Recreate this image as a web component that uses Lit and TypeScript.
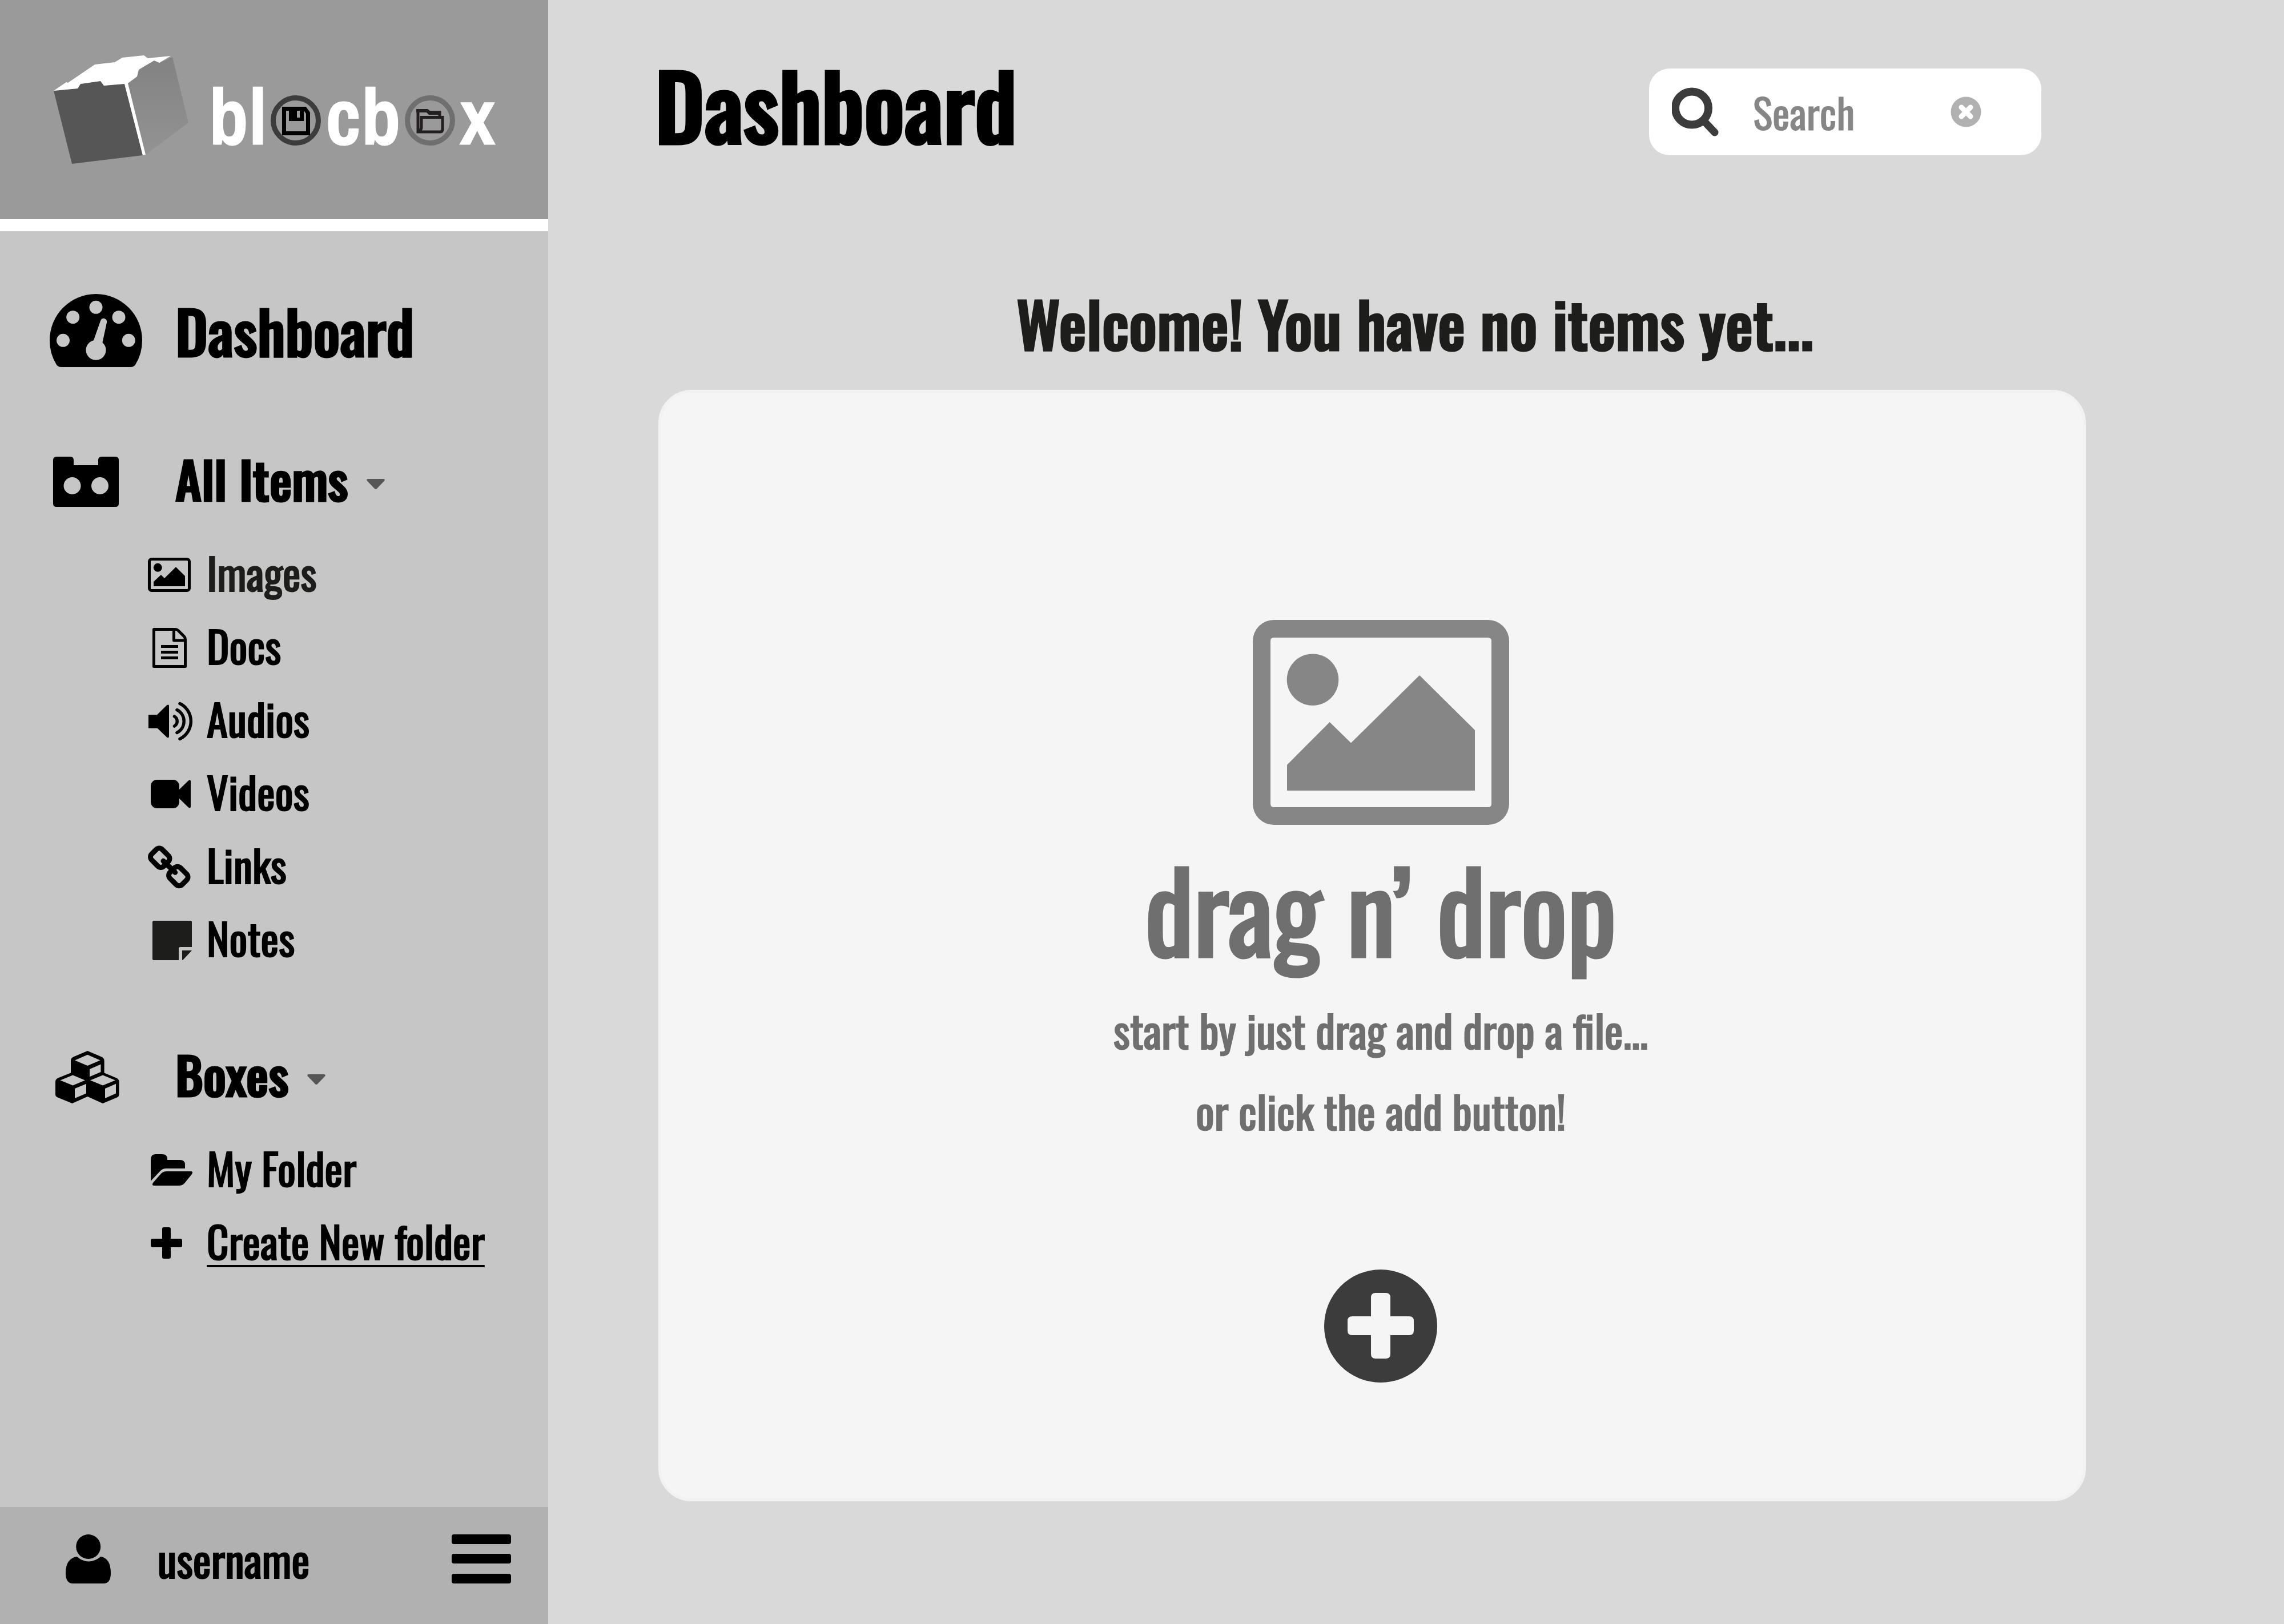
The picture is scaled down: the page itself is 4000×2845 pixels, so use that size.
import { LitElement, html, css, svg, nothing } from "lit";
import type { TemplateResult } from "lit";
import { customElement, property, state } from "lit/decorators.js";

const itemIcons: Record<string, TemplateResult> = {
  images: svg`
    <rect x="3.5" y="12.5" width="70" height="55" rx="4" fill="none" stroke="currentColor" stroke-width="5"/>
    <circle cx="18.3" cy="27.3" r="7.5"/>
    <path d="M11 52 24 40 30 46 50 26.3 66 42V60H11Z"/>`,
  docs: svg`
    <path d="M11.5 7.5H49Q52 7.5 54 9.5L64.5 20Q66.5 22 66.5 25V72.5H11.5Z M46.5 7.5V27H66.5" fill="none" stroke="currentColor" stroke-width="5" stroke-linejoin="round"/>
    <path d="M24 37.5H54M24 47.5H54M24 57.5H54" stroke="currentColor" stroke-width="5"/>`,
  audios: svg`
    <path d="M2 29.3H17L34 12.5Q38 10 38 14V67Q38 71 34 68.5L17.7 52.7H2Z"/>
    <path d="M47.5 32A10 10 0 0 1 47.5 49M52 20.5A22.5 22.5 0 0 1 52 60.5M57 9.5A34.5 34.5 0 0 1 57 71.5" fill="none" stroke="currentColor" stroke-width="5.5" stroke-linecap="round"/>`,
  videos: svg`
    <rect x="6" y="15" width="50" height="50" rx="11"/>
    <path d="M55 33 72 16.5Q76 14 76 18V62Q76 66 72 63.5L55 47Z"/>`,
  links: svg`
    <g fill="none" stroke="currentColor" stroke-width="9">
      <rect x="7.3" y="10.7" width="30" height="26" rx="7.5" transform="rotate(45 22.3 23.7)"/>
      <rect x="39.3" y="43" width="30" height="26" rx="7.5" transform="rotate(45 54.3 56)"/>
      <path d="M28 29.3 48.7 49.3" stroke-linecap="round"/>
    </g>`,
  notes: svg`
    <path fill="#1d1d1b" d="M11 6H76Q78 6 78 8V52H58Q55 52 55 55V75H11Q9 75 9 73V8Q9 6 11 6Z M61 58H78L64 73Q62 75 61 75Z"/>`,
  folder: svg`
    <path d="M6 59V21Q6 12 15 12H26Q35 12 35 20V22H57Q66 22 66 30V37H33Q27 37 23 41Z"/>
    <path d="M34 42H76Q81 42 78 47L65 63Q61 67 56 67H12Q7 67 10 62L24 46Q28 42 34 42Z"/>`,
  plus: svg`
    <path d="M26 15Q26 12 29 12H38Q41 12 41 15V32H58Q61 32 61 35V44Q61 47 58 47H41V64Q41 67 38 67H29Q26 67 26 64V47H9Q6 47 6 44V35Q6 32 9 32H26Z"/>`,
};

const groupIcons: Record<string, TemplateResult> = {
  dashboard: svg`<svg viewBox="0 0 162 128" width="162" height="128" aria-hidden="true">
    <path d="M0 81A81 81 0 0 1 162 81Q162 105 150 124Q147 128 142 128H20Q15 128 12 124Q0 105 0 81Z" fill="currentColor"/>
    <g fill="#c6c6c6">
      <circle cx="81" cy="23.3" r="11.5"/><circle cx="40.7" cy="40.7" r="11.5"/>
      <circle cx="121" cy="40.7" r="11.5"/><circle cx="23.5" cy="81.3" r="11.5"/>
      <circle cx="138.3" cy="81.3" r="11.5"/><circle cx="81" cy="98.3" r="17.5"/>
      <path d="M76 84 89 47Q91 42 96 43Q101 45 100 50L92 87Z"/>
    </g></svg>`,
  items: svg`<svg viewBox="-6 0 168 88" width="168" height="88" aria-hidden="true">
    <path fill="currentColor" fill-rule="evenodd" d="M6 0H30Q36 0 36 6V15H79V6Q79 0 85 0H109Q115 0 115 6V82Q115 88 109 88H6Q0 88 0 82V6Q0 0 6 0ZM33.5 36A15 15 0 1 0 33.5 66A15 15 0 1 0 33.5 36ZM82 36A15 15 0 1 0 82 66A15 15 0 1 0 82 36Z"/></svg>`,
  boxes: svg`<svg viewBox="-10 0 168 92" width="168" height="92" aria-hidden="true">
    <path fill="currentColor" d="M56.3 0 81 10.5Q85.6 12.5 85.6 17V38.5L107 47.5Q111.5 49.5 111.5 54V76Q111.5 80 108 81.5L83 92 56.3 80 29.5 92 4 81.5Q0 80 0 76V54Q0 49.5 4.5 47.5L27 38.5V17Q27 12.5 31.5 10.5Z"/>
    <g fill="#c6c6c6">
      <path d="M34 16.4 56.3 6.8 78.5 16.4 56.3 26Z M60 32 79.5 23.5V37L60 45.3Z"/>
      <path d="M8.5 51.6 30.5 42.5 52 51.6 30.5 60.4Z M34 66 54 57.7V74.4L34 83Z"/>
      <path d="M61 51.6 83 42.5 105 51.6 83 60.4Z M87 66 106 57.7V74.4L87 83Z"/>
    </g></svg>`,
};

interface Entry { icon: string; label: string; soft?: boolean; action?: boolean }

const items: Entry[] = [
  { icon: "images", label: "Images", soft: true },
  { icon: "docs", label: "Docs" },
  { icon: "audios", label: "Audios" },
  { icon: "videos", label: "Videos" },
  { icon: "links", label: "Links" },
  { icon: "notes", label: "Notes" },
];
const boxes: Entry[] = [
  { icon: "folder", label: "My Folder" },
  { icon: "plus", label: "Create New folder", action: true },
];

@customElement("blocbox-brand")
export class BlocboxBrand extends LitElement {
  static styles = css`
    :host { display: block; }
    .brand { display: flex; align-items: flex-start; padding: 96px 0 97px 94px; background: #9a9a9a; border-bottom: 21px solid #fff; }
    .cube { display: block; flex: none; }
    .word { box-sizing: border-box; height: 191px; margin-left: 36px; padding-top: 27px; color: #fff; font: 700 139px/160px "Archivo Narrow", "Roboto Condensed", "Liberation Sans", sans-serif; -webkit-text-stroke: 1px #fff; white-space: nowrap; }
    .o { margin: 0 7px; vertical-align: -2px; }
  `;
  render() {
    return html`<div class="brand">
      <svg class="cube" viewBox="94 96 236 191" width="236" height="191" aria-hidden="true">
        <defs><linearGradient id="side" x1="0" y1="0" x2="0" y2="1"><stop offset="0" stop-color="#828282"/><stop offset="1" stop-color="#939393"/></linearGradient></defs>
        <path fill="url(#side)" d="M222 146 240 134 243 121 270 106 279 110 302 100 330 215 255 271Z"/>
        <path fill="#565656" d="M94 159 136 155 141 147 176 142 182 150 218 146 250 272 126 287Z"/>
        <path fill="#fff" d="M94 159 116 144 119 145 166 113 201 109 214 101 252 97 259 102 299 98 279 110 270 106 243 122 240 134 224 146 255 271 250 272 218 147 182 150 176 142 141 147 136 155Z"/>
      </svg>
      <div class="word">bl<svg class="o" viewBox="0 0 88 88" width="88" height="88" role="img" aria-label="o">
          <circle cx="44" cy="44" r="39.5" fill="none" stroke="#3c3c3c" stroke-width="9"/>
          <path d="M23.5 23.5H60L65.5 31V66.5H23.5Z" fill="none" stroke="#000" stroke-width="7"/>
          <path fill="#000" fill-rule="evenodd" d="M32 23H58V45H32ZM46 27V39H51V27Z"/>
        </svg>cb<svg class="o" viewBox="0 0 88 88" width="88" height="88" role="img" aria-label="o">
          <circle cx="44" cy="44" r="39.5" fill="none" stroke="#6f6f6f" stroke-width="9"/>
          <path fill="none" stroke="#231f20" stroke-width="5" d="M61 36V30H44L39 27H23V64H62Q66 64 66 59V38.5H29V56Q29 60 25 63"/>
          <path fill="#231f20" d="M20 24H40L44 27.5H63V34H42L38 30H20Z"/>
        </svg>x</div>
    </div>`;
  }
}

@customElement("nav-group")
export class NavGroup extends LitElement {
  @property() label = "";
  @property() icon = "items";
  @property({ attribute: false }) entries: Entry[] = [];
  @state() private open = true;
  static styles = css`
    :host { display: block; }
    .head { display: flex; align-items: center; width: 100%; height: 120px; margin: 0; padding: 0 0 0 87px; border: 0; background: none; color: #000; font: 500 88px/120px Oswald, "Roboto Condensed", sans-serif; -webkit-text-stroke: 3px #000; text-align: left; cursor: pointer; }
    .slot { display: flex; flex: none; width: 220px; }
    .title { flex: none; margin-bottom: 12px; }
    .caret { margin: 8px 0 0 32px; }
    ul { margin: 39px 0 0; padding: 0 0 0 258px; list-style: none; }
    .row { display: flex; align-items: center; gap: 24px; height: 128px; margin: 0; padding: 0; border: 0; background: none; color: #000; font: 400 75px/120px Oswald, "Roboto Condensed", sans-serif; -webkit-text-stroke: 2px currentColor; text-decoration: none; white-space: nowrap; cursor: pointer; }
    .text { margin-bottom: 8px; }
    .soft { color: #1d1d1b; }
    .add { text-decoration: underline; text-decoration-thickness: 4px; text-underline-offset: 9px; text-decoration-skip-ink: none; }
    svg { display: block; flex: none; fill: currentColor; overflow: visible; }
  `;
  private entry(e: Entry) {
    const tone = e.soft ? "text soft" : e.action ? "text add" : "text";
    const inner = html`<svg viewBox="0 0 80 80" width="80" height="80" aria-hidden="true">${itemIcons[e.icon]}</svg><span class=${tone}>${e.label}</span>`;
    return html`<li>${e.action
      ? html`<button class="row" type="button">${inner}</button>`
      : html`<a class="row" href="#${e.icon}">${inner}</a>`}</li>`;
  }
  render() {
    return html`
      <button class="head" type="button" aria-expanded=${this.open} @click=${() => (this.open = !this.open)}>
        <span class="slot">${groupIcons[this.icon]}</span>
        <span class="title">${this.label}</span>
        <svg class="caret" viewBox="0 0 32 18" width="32" height="18" aria-hidden="true"><path fill="#565656" stroke="none" d="M2 0H30Q33 1 31 3.5L18 17Q16 19 14 17L1 3.5Q-1 1 2 0Z"/></svg>
      </button>
      ${this.open ? html`<ul>${this.entries.map((e) => this.entry(e))}</ul>` : nothing}`;
  }
}

@customElement("app-root")
export class AppRoot extends LitElement {
  static styles = css`
    :host { display: block; color: #000; font-family: Oswald, "Roboto Condensed", sans-serif; }
    .app { display: grid; grid-template-columns: minmax(900px, 24%) 1fr; min-height: 100vh; background: #d9d9d9; }
    .side { display: flex; flex-direction: column; background: #c6c6c6; }
    nav { flex: 1; padding-top: 110px; }
    .home { display: flex; align-items: center; height: 128px; padding-left: 87px; color: #000; font-weight: 500; font-size: 103px; line-height: 132px; text-decoration: none; -webkit-text-stroke: 3px #000; }
    .slot { display: flex; flex: none; width: 220px; }
    .first { margin-top: 141px; }
    .second { margin-top: 116px; }
    svg { display: block; flex: none; }
    .user { display: flex; align-items: center; height: 205px; padding: 0 65px 24px 115px; box-sizing: border-box; background: #b1b1b1; font-size: 76px; line-height: 120px; -webkit-text-stroke: 2px #000; }
    .name { margin: 0 auto 0 82px; }
    .icon-btn { display: block; margin: 0; padding: 0; border: 0; background: none; cursor: pointer; }
    main { display: flex; flex-direction: column; padding: 120px 347px 215px 193px; }
    .top { display: flex; justify-content: space-between; align-items: center; height: 152px; padding-right: 78px; }
    h1 { margin: 0 0 28px -6px; font-weight: 500; font-size: 156px; line-height: 152px; -webkit-text-stroke: 5px #000; }
    .search { display: flex; align-items: center; width: 687px; height: 152px; padding: 0 105px 0 40px; box-sizing: border-box; border-radius: 36px; background: #fff; }
    .search input { flex: 1; min-width: 0; height: 120px; margin: 0 38px 0 60px; padding: 0; border: 0; outline: 0; background: none; color: #3c3c3c; font: 400 72px/120px Oswald, "Roboto Condensed", sans-serif; -webkit-text-stroke: 1px #868686; }
    .search input::placeholder { color: #868686; opacity: 1; }
    h2 { margin: 193px 0 0; padding-left: 150px; text-align: center; color: #1d1d1b; font-weight: 500; font-size: 108px; line-height: 200px; -webkit-text-stroke: 3px #1d1d1b; }
    .drop { flex: 1; display: flex; flex-direction: column; align-items: center; margin-top: 18px; padding: 398px 0 0 30px; box-sizing: border-box; border: 5px solid #f2f2f2; border-radius: 58px; background: #f5f5f5; color: #6f6f6f; }
    .big { margin: 14px 0 13px; font-size: 193px; line-height: 260px; -webkit-text-stroke: 5px #6f6f6f; }
    .hint { margin: 0; font-size: 77px; line-height: 142px; -webkit-text-stroke: 2px #6f6f6f; }
    .plus { margin-top: 208px; }
  `;
  render() {
    return html`<div class="app">
      <aside class="side">
        <blocbox-brand></blocbox-brand>
        <nav aria-label="Library">
          <a class="home" href="#dashboard"><span class="slot">${groupIcons.dashboard}</span>Dashboard</a>
          <nav-group class="first" label="All Items" icon="items" .entries=${items}></nav-group>
          <nav-group class="second" label="Boxes" icon="boxes" .entries=${boxes}></nav-group>
        </nav>
        <footer class="user">
          <svg viewBox="0 0 79 86" width="79" height="86" aria-hidden="true"><circle cx="39.7" cy="21.5" r="21.5"/><path d="M19.6 39Q40 56 61.5 39Q79 42 79 68Q79 86 66 86H13Q0 86 0 68Q0 42 19.6 39Z"/></svg>
          <span class="name">username</span>
          <button class="icon-btn" type="button" aria-label="Menu">
            <svg viewBox="0 0 104 86" width="104" height="86" aria-hidden="true"><rect width="104" height="17" rx="4"/><rect y="34" width="104" height="17" rx="4"/><rect y="69" width="104" height="17" rx="4"/></svg>
          </button>
        </footer>
      </aside>
      <main>
        <header class="top">
          <h1>Dashboard</h1>
          <form class="search" role="search" @submit=${(e: Event) => e.preventDefault()}>
            <svg viewBox="0 0 82 86" width="82" height="86" aria-hidden="true" fill="none" stroke="#3c3c3c"><circle cx="35" cy="36.5" r="29" stroke-width="14"/><path d="M58 61 75 79" stroke-width="13" stroke-linecap="round"/></svg>
            <input type="text" aria-label="Search" placeholder="Search"/>
            <button class="icon-btn" type="reset" aria-label="Clear search">
              <svg viewBox="0 0 54 54" width="54" height="54" aria-hidden="true"><circle cx="27" cy="27" r="26.5" fill="#b1b1b1"/><path d="M19 19 35 35M35 19 19 35" stroke="#fff" stroke-width="9" stroke-linecap="round"/></svg>
            </button>
          </form>
        </header>
        <h2>Welcome! You have no items yet...</h2>
        <section class="drop" aria-label="Drop files">
          <svg viewBox="0 0 449 359" width="449" height="359" aria-hidden="true" fill="#868686">
            <path fill-rule="evenodd" d="M37 0H412A37 37 0 0 1 449 37V322A37 37 0 0 1 412 359H37A37 37 0 0 1 0 322V37A37 37 0 0 1 37 0ZM37 31Q31 31 31 37V322Q31 328 37 328H412Q418 328 418 322V37Q418 31 412 31Z"/>
            <circle cx="105" cy="104.7" r="45.3"/>
            <path d="M60 254 134.7 179 172 215.6 292 97 389 193V299H60Z"/>
          </svg>
          <p class="big">drag n’ drop</p>
          <p class="hint">start by just drag and drop a file...</p>
          <p class="hint">or click the add button!</p>
          <button class="icon-btn plus" type="button" aria-label="Add">
            <svg viewBox="0 0 198 198" width="198" height="198" aria-hidden="true"><circle cx="99" cy="99" r="99" fill="#3c3c3c"/><path fill="#f5f5f5" d="M82 49Q82 41 90 41H108Q116 41 116 49V82H149Q157 82 157 90V107Q157 115 149 115H116V148Q116 156 108 156H90Q82 156 82 148V115H49Q41 115 41 107V90Q41 82 49 82H82Z"/></svg>
          </button>
        </section>
      </main>
    </div>`;
  }
}
